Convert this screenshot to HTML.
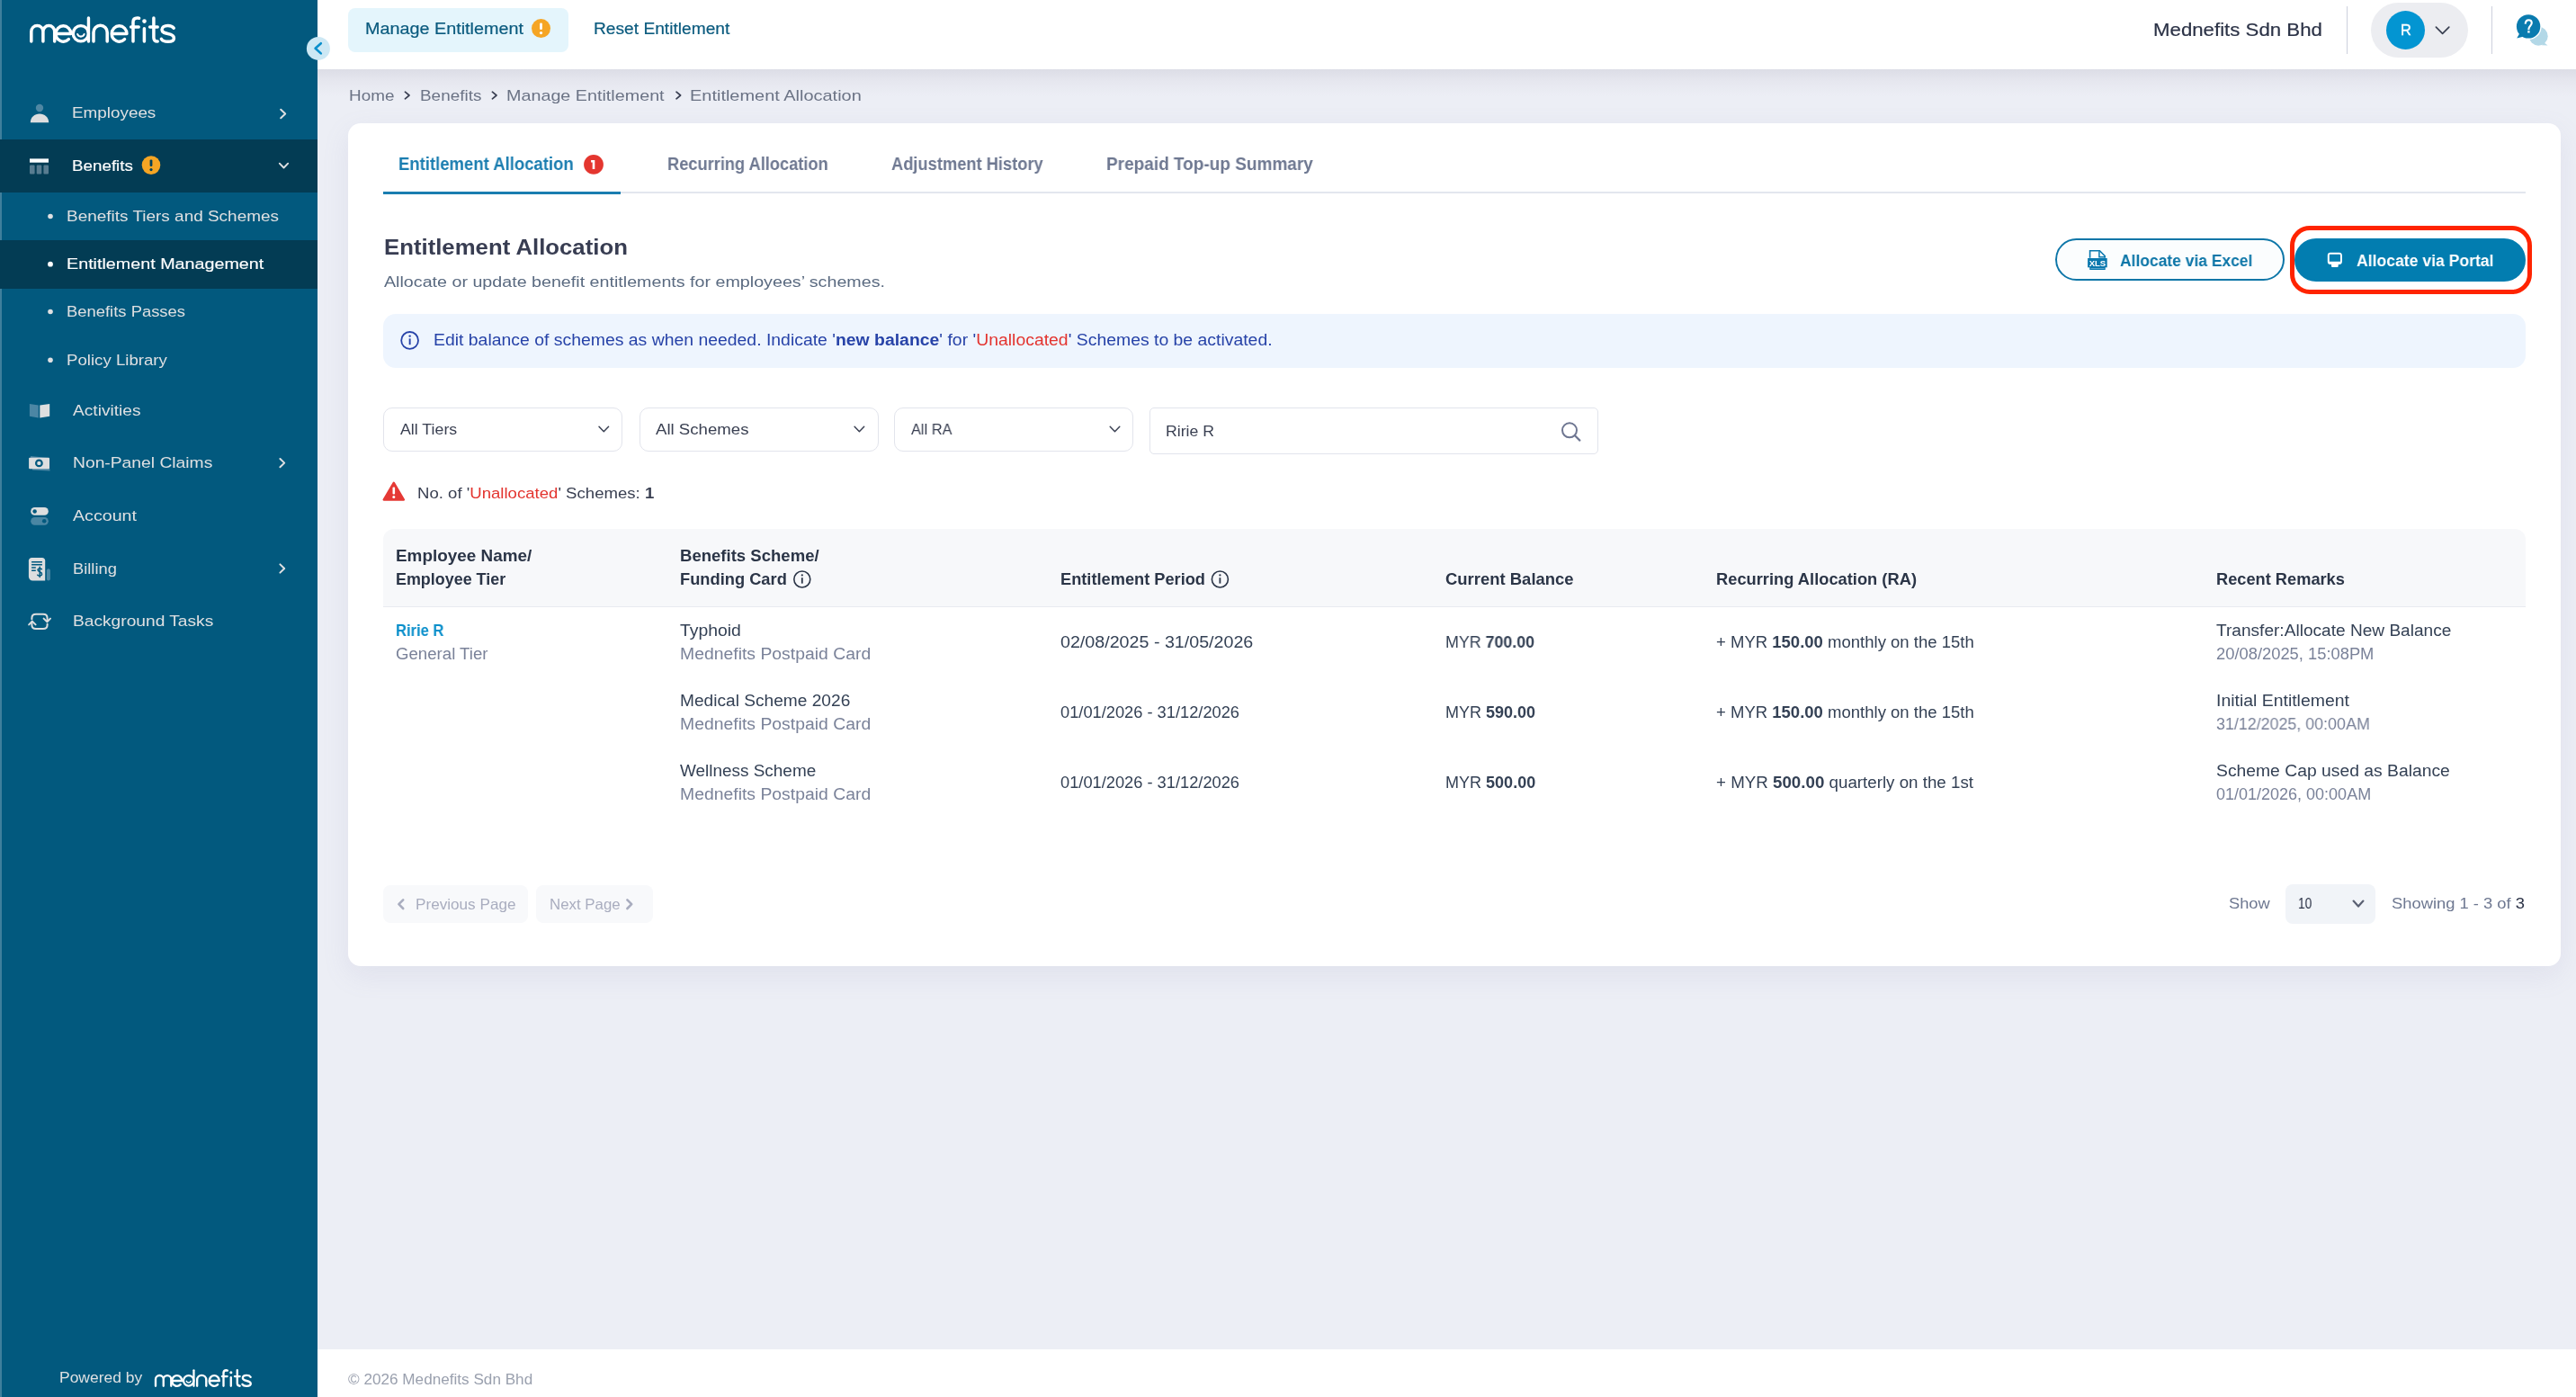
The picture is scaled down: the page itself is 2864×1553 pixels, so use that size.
<!DOCTYPE html>
<html><head><meta charset="utf-8"><title>Mednefits - Entitlement Allocation</title>
<style>
html,body{margin:0;padding:0;width:2864px;height:1553px;overflow:hidden;background:#ECEEF5;font-family:"Liberation Sans",sans-serif}
.abs{position:absolute;box-sizing:content-box}
.t{position:absolute;white-space:nowrap;transform-origin:0 50%;will-change:transform}
b{font-weight:700}
svg{position:absolute;overflow:visible}
</style></head><body>
<!-- sidebar -->
<div class="abs" style="left:0;top:0;width:353px;height:1553px;background:#02597E"></div>
<div class="abs" style="left:0;top:0;width:2px;height:1553px;background:#3F7F9C"></div>
<div class="abs" style="left:0;top:155px;width:353px;height:59px;background:#033C54"></div>
<div class="abs" style="left:0;top:267px;width:353px;height:54px;background:#033C54"></div>
<!-- main bg -->
<div class="abs" style="left:353px;top:0;width:2511px;height:1553px;background:#ECEEF5"></div>
<div class="abs" style="left:353px;top:77px;width:2511px;height:30px;background:linear-gradient(#DCDDE6,#E6E7EF 45%,#ECEEF5)"></div>
<!-- header -->
<div class="abs" style="left:353px;top:0;width:2511px;height:77px;background:#FFFFFF"></div>
<div class="abs" style="left:387px;top:9px;width:245px;height:49px;background:#E4F5FC;border-radius:8px"></div>
<div class="abs" style="left:2609px;top:7px;width:1px;height:53px;background:#CDD0DD"></div>
<div class="abs" style="left:2770px;top:7px;width:1px;height:53px;background:#CDD0DD"></div>
<div class="abs" style="left:2636px;top:3px;width:108px;height:61px;background:#ECEDF1;border-radius:31px"></div>
<div class="abs" style="left:2653px;top:12px;width:43px;height:43px;background:#0395D2;border-radius:50%"></div>
<!-- footer -->
<div class="abs" style="left:353px;top:1500px;width:2511px;height:53px;background:#FFFFFF"></div>
<!-- card -->
<div class="abs" style="left:387px;top:137px;width:2460px;height:937px;background:#FFFFFF;border-radius:14px;box-shadow:0 10px 30px rgba(130,130,185,0.12)"></div>
<!-- tabs line -->
<div class="abs" style="left:426px;top:213px;width:2382px;height:2px;background:#E3E6EE"></div>
<div class="abs" style="left:426px;top:212.5px;width:264px;height:3px;background:#1A7DB0"></div>
<!-- buttons -->
<div class="abs" style="left:2285px;top:265px;width:251px;height:43px;border:2px solid #0D76A8;border-radius:25px;background:#FBFDFE"></div>
<div class="abs" style="left:2551px;top:265px;width:257px;height:48px;background:#027DB0;border-radius:25px"></div>
<div class="abs" style="left:2546px;top:250.7px;width:259px;height:66.3px;border:5px solid #FF2400;border-radius:22px"></div>
<!-- banner -->
<div class="abs" style="left:426px;top:349px;width:2382px;height:60px;background:#EEF5FE;border-radius:14px"></div>
<!-- filters -->
<div class="abs" style="left:426px;top:453px;width:264px;height:47px;border:1.5px solid #E2E4EC;border-radius:10px"></div>
<div class="abs" style="left:710.5px;top:453px;width:264px;height:47px;border:1.5px solid #E2E4EC;border-radius:10px"></div>
<div class="abs" style="left:994px;top:453px;width:264px;height:47px;border:1.5px solid #E2E4EC;border-radius:10px"></div>
<div class="abs" style="left:1278px;top:453px;width:497px;height:50px;border:1.5px solid #E2E4EC;border-radius:5px"></div>
<!-- table header -->
<div class="abs" style="left:426px;top:588px;width:2382px;height:86px;background:#F7F8FA;border-radius:12px 12px 0 0;border-bottom:1.5px solid #E8EAF0"></div>
<!-- pagination -->
<div class="abs" style="left:426px;top:984px;width:161px;height:42px;background:#F8F9FB;border-radius:8px"></div>
<div class="abs" style="left:596px;top:984px;width:130px;height:42px;background:#F8F9FB;border-radius:8px"></div>
<div class="abs" style="left:2541px;top:983px;width:100px;height:44px;background:#F1F4F8;border-radius:8px"></div>

<svg width="2864" height="1553" viewBox="0 0 2864 1553" style="left:0;top:0;will-change:transform">
<defs>
<g id="logo" fill="none" stroke="#FFFFFF" stroke-width="3.5" stroke-linecap="round" stroke-linejoin="round">
<path d="M34.8,46.1 V35 A6.55,6.55 0 0 1 47.9,35 V46.1 M47.9,35 A6.4,6.4 0 0 1 60.7,35 V46.1"/>
<path d="M62.05,37.5 A8.35,8.7 0 0 1 78.75,37.5 H62.05 A8.35,8.7 0 0 0 76.3,43.6"/>
<circle cx="89.85" cy="37.25" r="8.6" stroke-width="3.4"/>
<path d="M98.45,19.9 V46.1" stroke-width="3.4"/>
<path d="M86.2,38 A3.94,3.94 0 0 0 93.6,38" stroke-width="2.1"/>
<path d="M104,46.1 V35.9 A7.6,7.6 0 0 1 119.2,35.9 V46.1"/>
<path d="M124.25,37.5 A8.35,8.7 0 0 1 140.95,37.5 H124.25 A8.35,8.7 0 0 0 138.5,43.6"/>
<path d="M148,46.1 V24.5 C148,21.2 149.8,19.9 152.6,19.9 L154.6,20.3 M145.6,30.1 H154.2"/>
<path d="M160.4,31.8 V46.1"/>
<circle cx="160.5" cy="23.6" r="2.3" fill="#FFFFFF" stroke="none"/>
<path d="M170.9,19.9 V41.8 C170.9,45 172.6,46.1 175.2,46.1 M166.6,30.1 H175.2"/>
<path d="M193.2,31.2 C191.8,29.1 189.4,28.4 186.6,28.4 C182.6,28.4 180,30.2 180,33.1 C180,36.1 183.2,36.8 186.6,37.5 C190.6,38.3 193.4,39.4 193.4,42.4 C193.4,45.1 190.6,46.2 186.6,46.2 C183.2,46.2 180.6,45.3 179.4,43.3"/>
</g>
</defs>
<use href="#logo"/>
<use href="#logo" transform="translate(171.8,1522) scale(0.667) translate(-33,-18)"/>

<!-- collapse button -->
<circle cx="353.9" cy="53.9" r="13" fill="#CDE8F4"/>
<path d="M356.8,48.2 L350.6,53.8 L356.8,59.4" fill="none" stroke="#0A8FCC" stroke-width="2.6" stroke-linecap="round" stroke-linejoin="round"/>

<!-- sidebar icons -->
<circle cx="44" cy="120" r="4.2" fill="#4F87A3"/>
<path d="M33.8,136.2 C33.8,130.2 38.4,126.4 44,126.4 C49.6,126.4 54.2,130.2 54.2,136.2 Z" fill="#DDDEDF"/>
<rect x="33" y="176.4" width="21" height="4.3" fill="#FFFFFF"/>
<rect x="33" y="183.6" width="5.6" height="10" rx="1" fill="#587C90"/>
<rect x="40.7" y="183.6" width="5.6" height="10" rx="1" fill="#587C90"/>
<rect x="48.4" y="183.6" width="5.6" height="10" rx="1" fill="#587C90"/>
<!-- activities book -->
<path d="M32.9,449 L42.8,450.6 V464.4 L32.9,462.8 Z" fill="#4C86A4"/>
<path d="M44.3,450.6 L55.2,448.9 V462.8 L44.3,464.5 Z" fill="#DDDEDF"/>
<!-- money -->
<path d="M34,507 L53,509 L55.6,523.6 L36,522.4 Z" fill="#4C86A4"/>
<rect x="32.1" y="508.7" width="22.9" height="12.5" rx="1" fill="#DDDEDF"/>
<circle cx="43.4" cy="514.9" r="3.3" fill="none" stroke="#02597E" stroke-width="2.2"/>
<!-- account -->
<rect x="34.2" y="564.1" width="19.6" height="8.7" rx="4.35" fill="#DDDEDF"/>
<circle cx="38.6" cy="568.4" r="2.25" fill="#02597E"/>
<rect x="34.2" y="575" width="19.6" height="8.7" rx="4.35" fill="#4A86A3"/>
<circle cx="49.2" cy="579.3" r="2.25" fill="#02597E"/>
<!-- billing -->
<rect x="51.9" y="632.2" width="4" height="13.4" rx="2" fill="#4A86A3"/>
<path d="M35.4,619.9 H46.8 C48.8,619.9 50.2,621.3 50.2,623.3 V645.6 H36.4 C33.9,645.6 31.9,643.6 31.9,641.1 V623.3 C31.9,621.3 33.4,619.9 35.4,619.9 Z" fill="#DDDEDF"/>
<path d="M35.1,624.8 H46.9 M35.1,627.8 H46.9 M35.1,631 H39.8 M35.1,634.2 H39.8" stroke="#02597E" stroke-width="1.4"/>
<path d="M44.2,630.2 V641.6 M46.4,632.8 C45.8,631.6 42,631.4 42,633.6 C42,636.2 46.6,635.4 46.6,638.2 C46.6,640.4 42.8,640.4 41.8,639.2" fill="none" stroke="#02597E" stroke-width="1.5" stroke-linecap="round"/>
<!-- background tasks -->
<g fill="none" stroke="#DDDEDF" stroke-width="2" stroke-linecap="round" stroke-linejoin="round">
<path d="M35.4,688.2 V687.2 C35.4,684.6 37,682.8 40,682.8 H48 C51,682.8 52.6,684.6 52.6,687.2 V690.6"/>
<path d="M48.6,687.6 L52.4,691.3 L56,687.6"/>
<path d="M52.6,693.8 V694.8 C52.6,697.4 51,699.1 48,699.1 H40 C37,699.1 35.4,697.4 35.4,694.8 V691.4"/>
<path d="M32.2,694.4 L35.8,690.6 L39.6,694.4"/>
</g>
<!-- sidebar chevrons -->
<g fill="none" stroke="#DFE0E2" stroke-width="2" stroke-linecap="round" stroke-linejoin="round">
<path d="M312.2,121.8 L317.2,126.5 L312.2,131.2"/>
<path d="M310.8,181.7 L315.5,186.5 L320.2,181.7" stroke-width="1.9"/>
<path d="M311.4,510 L316.2,514.6 L311.4,519.2"/>
<path d="M311.4,627.4 L316.2,632 L311.4,636.6"/>
</g>
<!-- bullets -->
<g fill="#DFE0E2">
<circle cx="56" cy="240.5" r="2.8"/>
<circle cx="56" cy="293.7" r="2.9" fill="#FFFFFF"/>
<circle cx="56" cy="346.5" r="2.8"/>
<circle cx="56" cy="400.3" r="2.8"/>
</g>
<!-- orange warning badges -->
<g>
<circle cx="168" cy="183.6" r="10.3" fill="#F5A524"/>
<rect x="166.6" y="177.4" width="2.8" height="7.6" rx="1.2" fill="#02405a"/>
<circle cx="168" cy="188.6" r="1.6" fill="#02405a"/>
<circle cx="601.5" cy="31.6" r="10.5" fill="#F5A524"/>
<rect x="600.1" y="25.4" width="2.8" height="7.6" rx="1.2" fill="#FFFFFF"/>
<circle cx="601.5" cy="36.6" r="1.6" fill="#FFFFFF"/>
</g>
<!-- header avatar chevron -->
<path d="M2708.4,30.2 L2715.6,37.4 L2722.8,30.2" fill="none" stroke="#3A4052" stroke-width="1.7" stroke-linecap="round" stroke-linejoin="round"/>
<!-- help icon -->
<circle cx="2822.2" cy="40.2" r="10.5" fill="#B3D8E7"/>
<path d="M2828,47 L2832.6,50.4 L2826,50.2 Z" fill="#B3D8E7"/>
<circle cx="2811.1" cy="29.4" r="14.6" fill="#FFFFFF"/>
<circle cx="2811.1" cy="29.4" r="13.2" fill="#0A7BAF"/>
<path d="M2801.6,36.5 L2798.2,42.5 L2805.2,40.8 Z" fill="#0A7BAF"/>
<path d="M2807.8,25.6 C2808.2,23.2 2809.6,22.2 2811.2,22.2 C2813.4,22.2 2814.8,23.6 2814.8,25.6 C2814.8,28.4 2811.4,29 2811.4,32.2" fill="none" stroke="#FFFFFF" stroke-width="2.1" stroke-linecap="square"/>
<rect x="2810.2" y="34.3" width="2.4" height="2.2" fill="#FFFFFF"/>

<!-- breadcrumb chevrons -->
<g fill="none" stroke="#3A3F52" stroke-width="1.7" stroke-linecap="round" stroke-linejoin="round">
<path d="M450.4,102.2 L455,106 L450.4,109.8"/>
<path d="M547.4,102.2 L552,106 L547.4,109.8"/>
<path d="M752,102.2 L756.6,106 L752,109.8"/>
</g>
<!-- tab badge -->
<circle cx="660" cy="182.9" r="10.9" fill="#E4362F"/>
<path d="M657.1,177.9 H661.3 V188 H658.7 V180.6 H657.1 Z" fill="#FFFFFF"/>

<!-- xls icon -->
<g>
<path d="M2323.6,286.8 V278.7 H2334.4 L2340.2,284.5 V286.8" fill="none" stroke="#0A78AE" stroke-width="1.6" stroke-linejoin="miter"/>
<path d="M2333.9,279.2 V285.7 H2340.2" fill="none" stroke="#0A78AE" stroke-width="1.5"/>
<rect x="2321.1" y="287" width="21.6" height="10.3" fill="#0A78AE"/>
<rect x="2323.9" y="297.6" width="16.2" height="1.8" fill="#8CC3DD" stroke="#0A78AE" stroke-width="1.2"/>
<text x="2331.9" y="295.6" text-anchor="middle" font-family="Liberation Sans" font-size="9.6" font-weight="700" fill="#FFFFFF" letter-spacing="-0.1">XLS</text>
</g>
<!-- monitor icon -->
<g fill="#FFFFFF">
<path d="M2590.8,280.8 H2600.9 C2602.6,280.8 2603.9,282.1 2603.9,283.8 V290.9 C2603.9,292.6 2602.6,293.9 2600.9,293.9 H2590.8 C2589.1,293.9 2587.8,292.6 2587.8,290.9 V283.8 C2587.8,282.1 2589.1,280.8 2590.8,280.8 Z M2590.6,282.8 C2590.1,282.8 2589.8,283.1 2589.8,283.6 V290.8 H2602 V283.6 C2602,283.1 2601.6,282.8 2601.1,282.8 Z" fill-rule="evenodd"/>
<rect x="2592" y="293.5" width="7.7" height="3.4" rx="0.8"/>
</g>
<!-- banner info icon -->
<circle cx="455.6" cy="378.4" r="9.4" fill="none" stroke="#2743A8" stroke-width="1.8"/>
<rect x="454.7" y="376.4" width="1.9" height="6.8" fill="#2743A8"/>
<circle cx="455.65" cy="373.6" r="1.2" fill="#2743A8"/>
<!-- select chevrons -->
<g fill="none" stroke="#3A4052" stroke-width="1.45" stroke-linecap="round" stroke-linejoin="round">
<path d="M666,474.2 L671.3,479.8 L676.6,474.2"/>
<path d="M950.1,474.2 L955.4,479.8 L960.7,474.2"/>
<path d="M1234.2,474.2 L1239.5,479.8 L1244.8,474.2"/>
</g>
<!-- search icon -->
<circle cx="1745" cy="478.3" r="8" fill="none" stroke="#6E7691" stroke-width="2"/>
<path d="M1751,484.3 L1756.4,489.6" stroke="#6E7691" stroke-width="2.2" stroke-linecap="round"/>
<!-- warning triangle -->
<path d="M437.8,536.6 L449,555.6 H426.6 Z" fill="#E53935" stroke="#E53935" stroke-width="2.2" stroke-linejoin="round"/>
<rect x="436.5" y="541.6" width="2.6" height="8" rx="1" fill="#FFFFFF"/>
<circle cx="437.8" cy="552.6" r="1.5" fill="#FFFFFF"/>
<!-- table header info icons -->
<g fill="none" stroke="#2B3547" stroke-width="1.6">
<circle cx="891.8" cy="644" r="9"/>
<circle cx="1356.4" cy="644" r="9"/>
</g>
<g fill="#2B3547">
<rect x="890.9" y="642.2" width="1.8" height="6.4"/>
<circle cx="891.8" cy="639.4" r="1.1"/>
<rect x="1355.5" y="642.2" width="1.8" height="6.4"/>
<circle cx="1356.4" cy="639.4" r="1.1"/>
</g>
<!-- pagination chevrons -->
<g fill="none" stroke="#A9ADBF" stroke-width="2.6" stroke-linecap="round" stroke-linejoin="round">
<path d="M448.2,1000.4 L443.4,1005.2 L448.2,1010"/>
<path d="M697.4,1000.4 L702.2,1005.2 L697.4,1010"/>
</g>
<path d="M2616.6,1001.6 L2622,1007.6 L2627.4,1001.6" fill="none" stroke="#5A6072" stroke-width="2.2" stroke-linecap="round" stroke-linejoin="round"/>
</svg>

<div class="t" id="sb_emp" style="left:80.10px;top:117.06px;font-size:17.40px;line-height:17.40px;color:#DFE0E2;font-weight:400;transform:scaleX(1.0845);">Employees</div>
<div class="t" id="sb_ben" style="left:80.10px;top:175.66px;font-size:17.40px;line-height:17.40px;color:#FFFFFF;font-weight:400;transform:scaleX(1.0805);-webkit-text-stroke:0.15px #FFFFFF">Benefits</div>
<div class="t" id="sb_tiers" style="left:73.80px;top:232.16px;font-size:17.40px;line-height:17.40px;color:#DFE0E2;font-weight:400;transform:scaleX(1.0899);">Benefits Tiers and Schemes</div>
<div class="t" id="sb_ent" style="left:73.80px;top:285.36px;font-size:17.40px;line-height:17.40px;color:#FFFFFF;font-weight:400;transform:scaleX(1.1342);-webkit-text-stroke:0.15px #FFFFFF">Entitlement Management</div>
<div class="t" id="sb_pass" style="left:73.50px;top:338.16px;font-size:17.40px;line-height:17.40px;color:#DFE0E2;font-weight:400;transform:scaleX(1.0585);">Benefits Passes</div>
<div class="t" id="sb_pol" style="left:73.50px;top:391.96px;font-size:17.40px;line-height:17.40px;color:#DFE0E2;font-weight:400;transform:scaleX(1.0719);">Policy Library</div>
<div class="t" id="sb_act" style="left:80.70px;top:447.86px;font-size:17.40px;line-height:17.40px;color:#DFE0E2;font-weight:400;transform:scaleX(1.1002);">Activities</div>
<div class="t" id="sb_npc" style="left:80.70px;top:506.46px;font-size:17.40px;line-height:17.40px;color:#DFE0E2;font-weight:400;transform:scaleX(1.1080);">Non-Panel Claims</div>
<div class="t" id="sb_acc" style="left:80.70px;top:565.16px;font-size:17.40px;line-height:17.40px;color:#DFE0E2;font-weight:400;transform:scaleX(1.1298);">Account</div>
<div class="t" id="sb_bill" style="left:80.70px;top:623.86px;font-size:17.40px;line-height:17.40px;color:#DFE0E2;font-weight:400;transform:scaleX(1.0537);">Billing</div>
<div class="t" id="sb_bg" style="left:80.70px;top:681.86px;font-size:17.40px;line-height:17.40px;color:#DFE0E2;font-weight:400;transform:scaleX(1.1023);">Background Tasks</div>
<div class="t" id="sb_pow" style="left:65.50px;top:1522.71px;font-size:16.30px;line-height:16.30px;color:#DFE0E2;font-weight:400;transform:scaleX(1.0723);">Powered by</div>
<div class="t" id="h_manage" style="left:406.20px;top:23.30px;font-size:18.30px;line-height:18.30px;color:#0A5A7E;font-weight:400;transform:scaleX(1.0817);-webkit-text-stroke:0.2px #0A5A7E">Manage Entitlement</div>
<div class="t" id="h_reset" style="left:659.90px;top:23.30px;font-size:18.30px;line-height:18.30px;color:#0A5A7E;font-weight:400;transform:scaleX(1.0485);-webkit-text-stroke:0.2px #0A5A7E">Reset Entitlement</div>
<div class="t" id="h_co" style="left:2393.50px;top:23.20px;font-size:20.50px;line-height:20.50px;color:#2B3246;font-weight:400;transform:scaleX(1.0847);-webkit-text-stroke:0.2px #2B3246">Mednefits Sdn Bhd</div>
<div class="t" id="bc_home" style="left:387.60px;top:98.06px;font-size:17.00px;line-height:17.00px;color:#6B7385;font-weight:400;transform:scaleX(1.1111);">Home</div>
<div class="t" id="bc_ben" style="left:466.60px;top:98.06px;font-size:17.00px;line-height:17.00px;color:#6B7385;font-weight:400;transform:scaleX(1.1133);">Benefits</div>
<div class="t" id="bc_man" style="left:563.40px;top:98.06px;font-size:17.00px;line-height:17.00px;color:#6B7385;font-weight:400;transform:scaleX(1.1614);">Manage Entitlement</div>
<div class="t" id="bc_ent" style="left:767.40px;top:98.06px;font-size:17.00px;line-height:17.00px;color:#6B7385;font-weight:400;transform:scaleX(1.1738);">Entitlement Allocation</div>
<div class="t" id="tab1" style="left:443.00px;top:172.75px;font-size:19.60px;line-height:19.60px;color:#1A7DB0;font-weight:700;transform:scaleX(0.9442);">Entitlement Allocation</div>
<div class="t" id="tab2" style="left:742.10px;top:172.75px;font-size:19.60px;line-height:19.60px;color:#6E7891;font-weight:700;transform:scaleX(0.9309);">Recurring Allocation</div>
<div class="t" id="tab3" style="left:991.00px;top:172.75px;font-size:19.60px;line-height:19.60px;color:#6E7891;font-weight:700;transform:scaleX(0.9335);">Adjustment History</div>
<div class="t" id="tab4" style="left:1229.60px;top:172.75px;font-size:19.60px;line-height:19.60px;color:#6E7891;font-weight:700;transform:scaleX(0.9697);">Prepaid Top-up Summary</div>
<div class="t" id="heading" style="left:426.80px;top:262.94px;font-size:24.60px;line-height:24.60px;color:#383D52;font-weight:700;transform:scaleX(1.0471);">Entitlement Allocation</div>
<div class="t" id="sub" style="left:426.80px;top:304.91px;font-size:17.30px;line-height:17.30px;color:#5A6A80;font-weight:400;transform:scaleX(1.1384);">Allocate or update benefit entitlements for employees&#8217; schemes.</div>
<div class="t" id="btn_xls" style="left:2356.60px;top:279.65px;font-size:19.20px;line-height:19.20px;color:#0D76A8;font-weight:700;transform:scaleX(0.9092);">Allocate via Excel</div>
<div class="t" id="btn_portal" style="left:2620.00px;top:279.65px;font-size:19.20px;line-height:19.20px;color:#FFFFFF;font-weight:700;transform:scaleX(0.9167);">Allocate via Portal</div>
<div class="t" id="banner" style="left:482.00px;top:370.21px;font-size:17.50px;line-height:17.50px;color:#2743A8;font-weight:400;transform:scaleX(1.1086);">Edit balance of schemes as when needed. Indicate '<b>new balance</b>' for '<span style="color:#E3342F">Unallocated</span>' Schemes to be activated.</div>
<div class="t" id="f_tiers" style="left:444.80px;top:468.86px;font-size:17.40px;line-height:17.40px;color:#3A4052;font-weight:400;transform:scaleX(1.0219);">All Tiers</div>
<div class="t" id="f_sch" style="left:728.50px;top:468.86px;font-size:17.40px;line-height:17.40px;color:#3A4052;font-weight:400;transform:scaleX(1.0708);">All Schemes</div>
<div class="t" id="f_ra" style="left:1012.50px;top:468.86px;font-size:17.40px;line-height:17.40px;color:#3A4052;font-weight:400;transform:scaleX(0.9415);">All RA</div>
<div class="t" id="f_search" style="left:1296.00px;top:470.86px;font-size:17.40px;line-height:17.40px;color:#3A4052;font-weight:400;transform:scaleX(1.0162);">Ririe R</div>
<div class="t" id="warn" style="left:463.50px;top:539.86px;font-size:17.40px;line-height:17.40px;color:#3A4052;font-weight:400;transform:scaleX(1.0682);">No. of '<span style="color:#E3342F">Unallocated</span>' Schemes: <b>1</b></div>
<div class="t" id="th1a" style="left:439.50px;top:609.71px;font-size:17.70px;line-height:17.70px;color:#2B3547;font-weight:700;transform:scaleX(1.0681);">Employee Name/</div>
<div class="t" id="th1b" style="left:439.50px;top:635.71px;font-size:17.70px;line-height:17.70px;color:#2B3547;font-weight:700;transform:scaleX(1.0125);">Employee Tier</div>
<div class="t" id="th2a" style="left:755.80px;top:609.71px;font-size:17.70px;line-height:17.70px;color:#2B3547;font-weight:700;transform:scaleX(1.0485);">Benefits Scheme/</div>
<div class="t" id="th2b" style="left:755.80px;top:635.71px;font-size:17.70px;line-height:17.70px;color:#2B3547;font-weight:700;transform:scaleX(1.0335);">Funding Card</div>
<div class="t" id="th3" style="left:1179.00px;top:635.71px;font-size:17.70px;line-height:17.70px;color:#2B3547;font-weight:700;transform:scaleX(1.0303);">Entitlement Period</div>
<div class="t" id="th4" style="left:1607.40px;top:635.71px;font-size:17.70px;line-height:17.70px;color:#2B3547;font-weight:700;transform:scaleX(1.0436);">Current Balance</div>
<div class="t" id="th5" style="left:1908.00px;top:635.71px;font-size:17.70px;line-height:17.70px;color:#2B3547;font-weight:700;transform:scaleX(1.0346);">Recurring Allocation (RA)</div>
<div class="t" id="th6" style="left:2463.60px;top:635.71px;font-size:17.70px;line-height:17.70px;color:#2B3547;font-weight:700;transform:scaleX(1.0308);">Recent Remarks</div>
<div class="t" id="r_name" style="left:439.50px;top:692.36px;font-size:18.00px;line-height:18.00px;color:#0A8FCB;font-weight:700;transform:scaleX(0.9202);">Ririe R</div>
<div class="t" id="r_tier" style="left:439.50px;top:718.36px;font-size:18.00px;line-height:18.00px;color:#7A8299;font-weight:400;transform:scaleX(1.0349);">General Tier</div>
<div class="t" id="r0_sch" style="left:755.80px;top:692.36px;font-size:18.00px;line-height:18.00px;color:#344155;font-weight:400;transform:scaleX(1.0770);">Typhoid</div>
<div class="t" id="r0_card" style="left:755.80px;top:718.36px;font-size:18.00px;line-height:18.00px;color:#7A8299;font-weight:400;transform:scaleX(1.0766);">Mednefits Postpaid Card</div>
<div class="t" id="r0_per" style="left:1179.30px;top:705.36px;font-size:18.00px;line-height:18.00px;color:#344155;font-weight:400;transform:scaleX(1.0924);">02/08/2025 - 31/05/2026</div>
<div class="t" id="r0_bal" style="left:1607.30px;top:705.36px;font-size:18.00px;line-height:18.00px;color:#344155;font-weight:400;transform:scaleX(0.9904);">MYR <b>700.00</b></div>
<div class="t" id="r0_ra" style="left:1908.00px;top:705.36px;font-size:18.00px;line-height:18.00px;color:#344155;font-weight:400;transform:scaleX(1.0288);">+ MYR <b>150.00</b> monthly on the 15th</div>
<div class="t" id="r0_rem" style="left:2463.60px;top:692.36px;font-size:18.00px;line-height:18.00px;color:#344155;font-weight:400;transform:scaleX(1.0606);">Transfer:Allocate New Balance</div>
<div class="t" id="r0_dt" style="left:2463.60px;top:718.36px;font-size:18.00px;line-height:18.00px;color:#7A8299;font-weight:400;transform:scaleX(1.0189);">20/08/2025, 15:08PM</div>
<div class="t" id="r1_sch" style="left:755.80px;top:770.36px;font-size:18.00px;line-height:18.00px;color:#344155;font-weight:400;transform:scaleX(1.0628);">Medical Scheme 2026</div>
<div class="t" id="r1_card" style="left:755.80px;top:796.36px;font-size:18.00px;line-height:18.00px;color:#7A8299;font-weight:400;transform:scaleX(1.0766);">Mednefits Postpaid Card</div>
<div class="t" id="r1_per" style="left:1179.30px;top:783.36px;font-size:18.00px;line-height:18.00px;color:#344155;font-weight:400;transform:scaleX(1.0144);">01/01/2026 - 31/12/2026</div>
<div class="t" id="r1_bal" style="left:1607.30px;top:783.36px;font-size:18.00px;line-height:18.00px;color:#344155;font-weight:400;transform:scaleX(0.9994);">MYR <b>590.00</b></div>
<div class="t" id="r1_ra" style="left:1908.00px;top:783.36px;font-size:18.00px;line-height:18.00px;color:#344155;font-weight:400;transform:scaleX(1.0288);">+ MYR <b>150.00</b> monthly on the 15th</div>
<div class="t" id="r1_rem" style="left:2463.60px;top:770.36px;font-size:18.00px;line-height:18.00px;color:#344155;font-weight:400;transform:scaleX(1.0789);">Initial Entitlement</div>
<div class="t" id="r1_dt" style="left:2463.60px;top:796.36px;font-size:18.00px;line-height:18.00px;color:#7A8299;font-weight:400;transform:scaleX(0.9922);">31/12/2025, 00:00AM</div>
<div class="t" id="r2_sch" style="left:755.80px;top:848.36px;font-size:18.00px;line-height:18.00px;color:#344155;font-weight:400;transform:scaleX(1.0519);">Wellness Scheme</div>
<div class="t" id="r2_card" style="left:755.80px;top:874.36px;font-size:18.00px;line-height:18.00px;color:#7A8299;font-weight:400;transform:scaleX(1.0766);">Mednefits Postpaid Card</div>
<div class="t" id="r2_per" style="left:1179.30px;top:861.36px;font-size:18.00px;line-height:18.00px;color:#344155;font-weight:400;transform:scaleX(1.0144);">01/01/2026 - 31/12/2026</div>
<div class="t" id="r2_bal" style="left:1607.30px;top:861.36px;font-size:18.00px;line-height:18.00px;color:#344155;font-weight:400;transform:scaleX(1.0014);">MYR <b>500.00</b></div>
<div class="t" id="r2_ra" style="left:1908.00px;top:861.36px;font-size:18.00px;line-height:18.00px;color:#344155;font-weight:400;transform:scaleX(1.0412);">+ MYR <b>500.00</b> quarterly on the 1st</div>
<div class="t" id="r2_rem" style="left:2463.60px;top:848.36px;font-size:18.00px;line-height:18.00px;color:#344155;font-weight:400;transform:scaleX(1.0729);">Scheme Cap used as Balance</div>
<div class="t" id="r2_dt" style="left:2463.60px;top:874.36px;font-size:18.00px;line-height:18.00px;color:#7A8299;font-weight:400;transform:scaleX(0.9986);">01/01/2026, 00:00AM</div>
<div class="t" id="pg_prev" style="left:461.50px;top:997.31px;font-size:16.50px;line-height:16.50px;color:#A9ADBF;font-weight:400;transform:scaleX(1.0389);">Previous Page</div>
<div class="t" id="pg_next" style="left:610.70px;top:997.31px;font-size:16.50px;line-height:16.50px;color:#A9ADBF;font-weight:400;transform:scaleX(1.0202);">Next Page</div>
<div class="t" id="pg_show" style="left:2477.90px;top:996.31px;font-size:16.50px;line-height:16.50px;color:#6E7891;font-weight:400;transform:scaleX(1.1070);">Show</div>
<div class="t" id="pg_10" style="left:2554.70px;top:996.31px;font-size:16.50px;line-height:16.50px;color:#2B3246;font-weight:400;transform:scaleX(0.8334);">10</div>
<div class="t" id="pg_showing" style="left:2659.00px;top:996.31px;font-size:16.50px;line-height:16.50px;color:#6E7891;font-weight:400;transform:scaleX(1.1127);">Showing 1 - 3 of <span style="color:#2B3246">3</span></div>
<div class="t" id="footer" style="left:387.20px;top:1525.56px;font-size:16.00px;line-height:16.00px;color:#9AA0AE;font-weight:400;transform:scaleX(1.0717);">&#169; 2026 Mednefits Sdn Bhd</div>
<div class="t" id="avatar" style="left:2669.40px;top:24.56px;font-size:16.40px;line-height:16.40px;color:#FFFFFF;font-weight:400;transform:scaleX(1.0000);-webkit-text-stroke:0.4px #FFFFFF">R</div>
</body></html>
